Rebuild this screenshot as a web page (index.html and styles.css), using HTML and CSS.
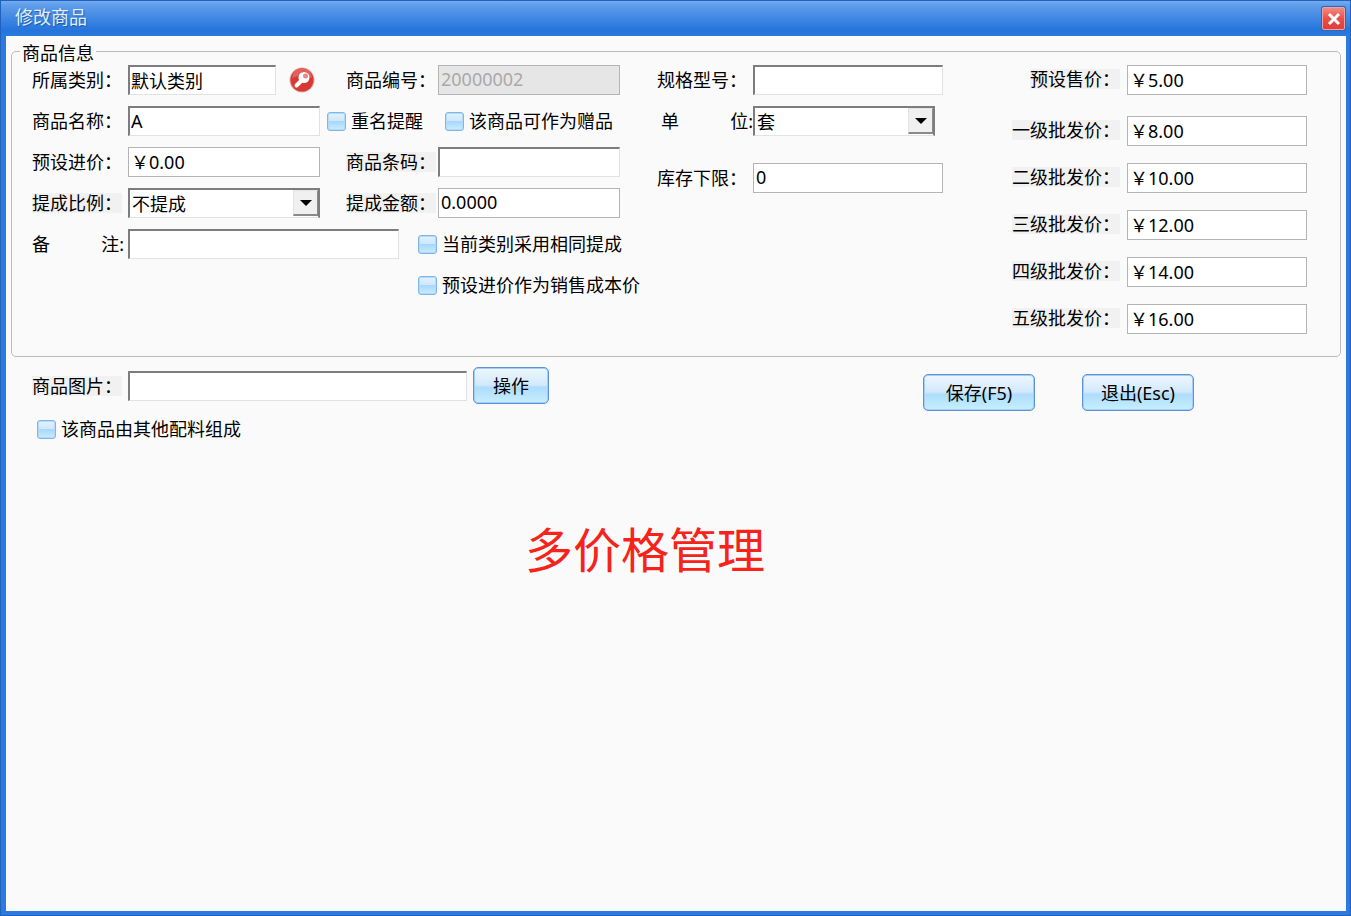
FILE: index.html
```html
<!DOCTYPE html>
<html lang="zh-CN">
<head>
    <meta charset="utf-8">
    <title>修改商品</title>
    <link rel="stylesheet" href="styles.css">
</head>
<body>
<form class="window">
    <div class="titlebar">
        <h1>修改商品</h1>
        <button type="button" class="close" aria-label="关闭">
            <svg width="14" height="14" viewBox="0 0 14 14"><path d="M2 2L12 12M12 2L2 12" stroke="#fff" stroke-width="3"/></svg>
        </button>
    </div>
    <div class="content">
        <fieldset>
            <legend>商品信息</legend>
            <div class="info">
                <!--基本信息-->
                <div class="basic">
                    <div class="row">
                        <label class="name" for="category">所属类别：</label>
                        <input class="sunken short" type="text" id="category" value="默认类别">
                        <button type="button" class="search" aria-label="选择类别">
                            <svg width="26" height="26" viewBox="0 0 26 26">
                                <circle cx="13" cy="13" r="12.5" fill="#e9a9a5"/>
                                <circle cx="13" cy="13" r="11.5" fill="#d63a35"/>
                                <path d="M3 11A10 10 0 0 1 23 11Q13 6 3 11Z" fill="#e2615b"/>
                                <path d="M13 13L7.5 18.5" stroke="#fff" stroke-width="4" stroke-linecap="round"/>
                                <circle cx="15" cy="10.5" r="5.5" fill="#fff"/>
                                <circle cx="16.5" cy="9" r="2.5" fill="#e88a86"/>
                            </svg>
                        </button>
                        <label class="name second" for="code">商品编号：</label>
                        <input class="flat mid" type="text" id="code" value="20000002" disabled>
                    </div>
                    <div class="row">
                        <label class="name" for="goods">商品名称：</label>
                        <input class="sunken" type="text" id="goods" value="A">
                        <label class="check remind"><input type="checkbox">重名提醒</label>
                        <label class="check gift"><input type="checkbox">该商品可作为赠品</label>
                    </div>
                    <div class="row">
                        <label class="name" for="cost">预设进价：</label>
                        <input class="flat" type="text" id="cost" value="￥0.00">
                        <label class="name second" for="barcode"><span class="shade">商品条码：</span></label>
                        <input class="sunken mid" type="text" id="barcode">
                    </div>
                    <div class="row">
                        <label class="name" for="rate"><span class="shade">提成比例：</span></label>
                        <div class="combo">
                            <select class="sunken" id="rate"><option>不提成</option></select>
                            <span class="arrow"></span>
                        </div>
                        <label class="name second" for="amount"><span class="shade">提成金额：</span></label>
                        <input class="flat mid" type="text" id="amount" value="0.0000">
                    </div>
                    <div class="row">
                        <label class="name spread" for="remark"><span>备</span><span>注:</span></label>
                        <input class="sunken long" type="text" id="remark">
                        <label class="check same"><input type="checkbox">当前类别采用相同提成</label>
                    </div>
                    <div class="row">
                        <label class="check alone"><input type="checkbox">预设进价作为销售成本价</label>
                    </div>
                </div>
                <!--规格、单位、库存-->
                <div class="spec">
                    <div class="row">
                        <label class="name" for="model">规格型号：</label>
                        <input class="sunken" type="text" id="model">
                    </div>
                    <div class="row">
                        <label class="name spread unit" for="unit"><span>单</span><span>位:</span></label>
                        <div class="combo mid">
                            <select class="sunken" id="unit"><option>套</option></select>
                            <span class="arrow"></span>
                        </div>
                    </div>
                    <div class="row stock">
                        <label class="name" for="stock">库存下限：</label>
                        <input class="flat" type="text" id="stock" value="0">
                    </div>
                </div>
                <!--多级价格-->
                <div class="prices">
                    <div class="row retail">
                        <label for="p0"><span class="shade">预设售价：</span></label>
                        <input class="flat" type="text" id="p0" value="￥5.00">
                    </div>
                    <div class="row">
                        <label for="p1"><span class="shade">一级批发价：</span></label>
                        <input class="flat" type="text" id="p1" value="￥8.00">
                    </div>
                    <div class="row">
                        <label for="p2"><span class="shade">二级批发价：</span></label>
                        <input class="flat" type="text" id="p2" value="￥10.00">
                    </div>
                    <div class="row">
                        <label for="p3"><span class="shade">三级批发价：</span></label>
                        <input class="flat" type="text" id="p3" value="￥12.00">
                    </div>
                    <div class="row">
                        <label for="p4"><span class="shade">四级批发价：</span></label>
                        <input class="flat" type="text" id="p4" value="￥14.00">
                    </div>
                    <div class="row">
                        <label for="p5"><span class="shade">五级批发价：</span></label>
                        <input class="flat" type="text" id="p5" value="￥16.00">
                    </div>
                </div>
            </div>
        </fieldset>
        <div class="bottom">
            <div class="extra">
                <div class="row">
                    <label class="name" for="picture"><span class="shade">商品图片：</span></label>
                    <input class="sunken wide" type="text" id="picture">
                    <button type="button" class="btn small">操作</button>
                </div>
                <label class="check compose"><input type="checkbox">该商品由其他配料组成</label>
            </div>
            <div class="actions">
                <button type="submit" class="btn">保存(F5)</button>
                <button type="button" class="btn">退出(Esc)</button>
            </div>
        </div>
        <p class="note">多价格管理</p>
    </div>
</form>
</body>
</html>
```
FILE: styles.css
```css
*{margin: 0;padding: 0;box-sizing: border-box;}
body,input,select,button{font-family: "Noto Sans","Noto Sans CJK SC",sans-serif;font-size: 18px;line-height: 20px;color: #000;}

/*窗口*/
.window{display: flex;flex-direction: column;min-height: 100vh;padding: 0 4px 4px 5px;background: #2c7adf;border: 1px solid #1f62bd;}
.titlebar{display: flex;align-items: center;justify-content: space-between;height: 35px;margin: 0 -4px 0 -5px;padding: 0 5px 0 14px;background: linear-gradient(#74abee,#5f9dea 12%,#3f88e2 50%,#2474dc 85%,#2a7ade);}
.titlebar h1{padding-bottom: 4px;font-size: 18px;font-weight: normal;color: #e4effb;text-shadow: 1px 1px 1px #1c5bb0;}
.close{display: flex;align-items: center;justify-content: center;width: 23px;height: 23px;border: 1px solid #f0a3a0;border-radius: 2px;background: linear-gradient(#f08b80,#e8504b 50%,#e23c38);box-shadow: 0 0 0 1px #2c66b8;cursor: pointer;}
.content{flex: 1;padding: 3px 5px 0;background: #fafafa;}

/*商品信息*/
fieldset{min-width: 0;height: 318px;border: 1px solid #bcbcbc;border-radius: 5px;}
legend{margin-left: 8px;padding: 4px 2px 0;line-height: 20px;}
.info{display: flex;padding: 2px 33px 0 20px;}
.basic,.spec,.prices{display: flex;flex-direction: column;gap: 11px;flex: none;}
.row{display: flex;align-items: center;height: 30px;}
.basic{width: 608px;}
.spec{margin-left: 17px;}
.spec .stock{margin-top: 16px;}
.prices{gap: 17px;margin-left: auto;}
.prices .retail{margin-bottom: 4px;}
.prices .row{justify-content: flex-end;gap: 7px;}
.prices label{padding-bottom: 2px;}
.prices input{width: 180px;}

.name{flex: none;width: 96px;white-space: nowrap;}
.second{width: 92px;margin-left: auto;}
.spread{display: flex;justify-content: space-between;padding-right: 4px;}
.unit{padding: 0 0 0 4px;}
.shade{display: inline-block;background: #f1f1f1;}

/*输入框*/
.flat,.sunken{width: 192px;height: 30px;padding: 0 2px 3px;background: #fff;border: 1px solid #b4b4b4;outline: none;}
.sunken{padding: 0 1px 2px;border-width: 2px 1px 1px 2px;border-color: #7d7d7d #e2e2e2 #e2e2e2 #7d7d7d;}
.flat:disabled{color: #a9a9a9;background: #e6e6e6;}
.short{width: 148px;}
.basic .mid{width: 182px;margin-right: 20px;}
.long{width: 271px;}
.wide{width: 339px;}
.spec input{width: 190px;}
.combo{display: grid;width: 192px;}
.spec .combo{width: 182px;}
.combo select,.combo .arrow{grid-area: 1/1;}
.combo select{width: 100%;padding: 0 2px;appearance: none;border-right: 2px solid #7d7d7d;border-radius: 0;}
.arrow{display: flex;align-items: center;justify-content: center;justify-self: end;width: 25px;height: 26px;margin: 2px 2px 0 0;background: #f0f0f0;border: 1px solid #e4e4e4;border-right-color: #8a8a8a;border-bottom: 2px solid #8a8a8a;pointer-events: none;}
.arrow::after{content: "";border: 6px solid transparent;border-top-color: #000;border-bottom: 0;}
.search{display: flex;margin-left: 13px;border: 0;background: none;cursor: pointer;}

/*复选框*/
.check{display: flex;align-items: center;gap: 5px;white-space: nowrap;}
.check input{appearance: none;width: 19px;height: 19px;border: 1px solid #7fb5e8;border-radius: 3px;background: linear-gradient(#e4f2fe,#cde7fd 45%,#a9d7fb 50%,#c8edff);box-shadow: inset 0 0 0 1px #b5d9f8;}
.check input:checked{background: #4a9be8;}
.remind{margin-left: 7px;}
.gift{margin-left: 22px;}
.same{margin-left: 19px;}
.alone{margin-left: 386px;}

/*底部*/
.bottom{display: flex;justify-content: space-between;padding: 10px 147px 0 21px;}
.extra .row{height: 37px;}
.compose{margin: 15px 0 0 5px;}
.btn{width: 112px;height: 37px;border: 1px solid #5c93d8;border-radius: 5px;background: linear-gradient(#eef7ff,#d3e9fc 48%,#aedcfb 56%,#c6f0ff);box-shadow: inset 0 0 0 1px #a5cdf5;cursor: pointer;}
.small{width: 76px;margin-left: 6px;}
.actions{display: flex;gap: 47px;padding-top: 7px;}
.note{padding: 81px 62px 0 0;text-align: center;font-size: 48px;line-height: 60px;color: #f5231a;}
```
